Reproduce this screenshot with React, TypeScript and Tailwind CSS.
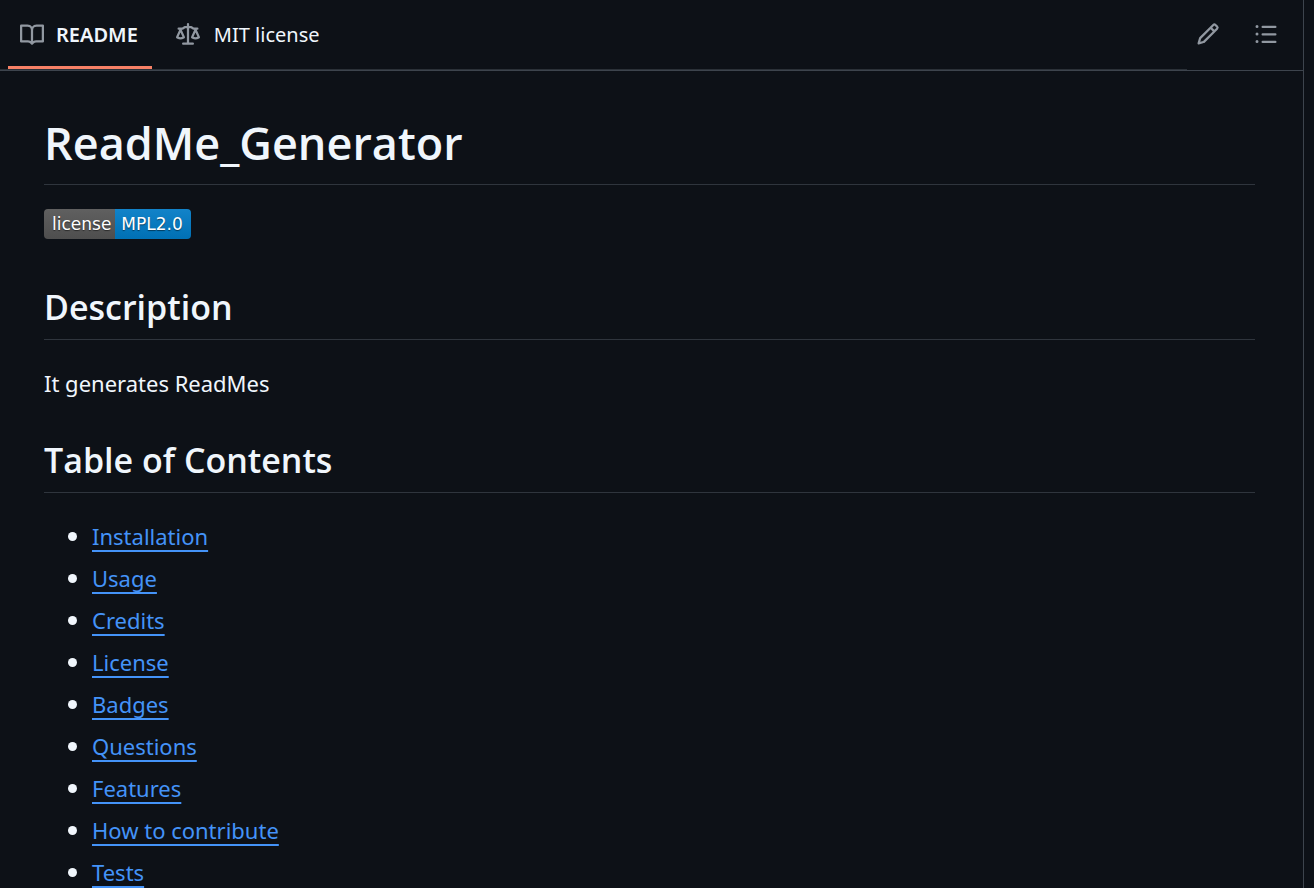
import type { ReactNode } from "react";

const icons = {
  book: "M0 1.75A.75.75 0 0 1 .75 1h4.253c1.227 0 2.317.59 3 1.501A3.743 3.743 0 0 1 11.006 1h4.245a.75.75 0 0 1 .75.75v10.5a.75.75 0 0 1-.75.75h-4.507a2.25 2.25 0 0 0-1.591.659l-.622.621a.75.75 0 0 1-1.06 0l-.622-.621A2.25 2.25 0 0 0 5.258 13H.75a.75.75 0 0 1-.75-.75Zm7.251 10.324.004-5.073-.002-2.253A2.25 2.25 0 0 0 5.003 2.5H1.5v9h3.757a3.75 3.75 0 0 1 1.994.574ZM8.755 4.75l-.004 7.322a3.752 3.752 0 0 1 1.992-.572H14.5v-9h-3.495a2.25 2.25 0 0 0-2.25 2.25Z",
  law: "M8.75.75V2h.985c.304 0 .603.08.867.231l1.29.736c.038.022.08.033.124.033h2.234a.75.75 0 0 1 0 1.5h-.427l2.111 4.692a.75.75 0 0 1-.154.838l-.53-.53.529.531-.001.002-.002.002-.006.006-.006.005-.01.01-.045.04c-.21.176-.441.327-.686.45C14.556 10.78 13.88 11 13 11a4.498 4.498 0 0 1-2.023-.454 3.544 3.544 0 0 1-.686-.45l-.045-.04-.016-.015-.006-.006-.004-.004v-.001a.75.75 0 0 1-.154-.838L12.178 4.5h-.162c-.305 0-.604-.079-.868-.231l-1.29-.736a.245.245 0 0 0-.124-.033H8.75V13h2.5a.75.75 0 0 1 0 1.5h-6.5a.75.75 0 0 1 0-1.5h2.5V3.5h-.984a.245.245 0 0 0-.124.033l-1.289.737c-.265.15-.564.23-.869.23h-.162l2.112 4.692a.75.75 0 0 1-.154.838l-.53-.53.529.531-.001.002-.002.002-.006.006-.016.015-.045.04c-.21.176-.441.327-.686.45C4.556 10.78 3.88 11 3 11a4.498 4.498 0 0 1-2.023-.454 3.544 3.544 0 0 1-.686-.45l-.045-.04-.016-.015-.006-.006-.004-.004v-.001a.75.75 0 0 1-.154-.838L2.178 4.5H1.75a.75.75 0 0 1 0-1.5h2.234a.249.249 0 0 0 .125-.033l1.288-.737c.265-.15.564-.23.869-.23h.984V.75a.75.75 0 0 1 1.5 0Zm2.945 8.477c.285.135.718.273 1.305.273s1.02-.138 1.305-.273L13 6.327Zm-10 0c.285.135.718.273 1.305.273s1.02-.138 1.305-.273L3 6.327Z",
  pencil:
    "M11.013 1.427a1.75 1.75 0 0 1 2.474 0l1.086 1.086a1.75 1.75 0 0 1 0 2.474l-8.61 8.61c-.21.21-.47.364-.756.445l-3.251.93a.75.75 0 0 1-.927-.928l.929-3.25c.081-.286.235-.547.445-.758l8.61-8.61Zm.176 4.823L9.75 4.81l-6.286 6.287a.253.253 0 0 0-.064.108l-.558 1.953 1.953-.558a.253.253 0 0 0 .108-.064Zm1.238-3.763a.25.25 0 0 0-.354 0L10.811 3.75l1.439 1.44 1.263-1.263a.25.25 0 0 0 0-.354Z",
  list: "M5.75 2.5h8.5a.75.75 0 0 1 0 1.5h-8.5a.75.75 0 0 1 0-1.5Zm0 5h8.5a.75.75 0 0 1 0 1.5h-8.5a.75.75 0 0 1 0-1.5Zm0 5h8.5a.75.75 0 0 1 0 1.5h-8.5a.75.75 0 0 1 0-1.5ZM2 14a1 1 0 1 1 0-2 1 1 0 0 1 0 2Zm1-6a1 1 0 1 1-2 0 1 1 0 0 1 2 0ZM2 4a1 1 0 1 1 0-2 1 1 0 0 1 0 2Z",
};

function Icon({ name }: { name: keyof typeof icons }) {
  return (
    <svg viewBox="0 0 16 16" className="size-6 shrink-0 fill-[#9198a1]" aria-hidden="true">
      <path d={icons[name]} />
    </svg>
  );
}

function SectionHeading({ children }: { children: ReactNode }) {
  return (
    <h2 className="mb-[25px] border-b border-[#2f353d] pb-[10px] font-['Open_Sans',sans-serif] text-[34px] leading-[43px] font-semibold">
      {children}
    </h2>
  );
}

const contents = [
  "Installation",
  "Usage",
  "Credits",
  "License",
  "Badges",
  "Questions",
  "Features",
  "How to contribute",
  "Tests",
];

export default function App() {
  return (
    <div className="h-screen overflow-hidden bg-[#0d1117] pr-[10px] font-['Noto_Sans',sans-serif] text-[#f0f6fc]">
      <div className="min-h-full border-r border-[#3d444d]">
        <header className="flex h-[71px] border-b border-[#3d444d]">
          <nav className="flex flex-1 border-b border-[#2b3138] pl-2 text-xl" aria-label="Repository files">
            <a
              href="#readme"
              aria-current="page"
              className="flex items-center gap-3 border-b-3 border-[#f78166] pt-[3px] pr-[14px] pl-3 font-semibold"
            >
              <Icon name="book" />
              README
            </a>
            <a href="#mit-license" className="ml-3 flex items-center gap-[14px] px-3">
              <Icon name="law" />
              MIT license
            </a>
          </nav>
          <div className="flex items-center gap-4 pr-4 pb-[2px]">
            <button type="button" aria-label="Edit file" className="grid size-[42px] place-items-center">
              <Icon name="pencil" />
            </button>
            <button type="button" aria-label="Outline" className="grid size-[42px] place-items-center">
              <Icon name="list" />
            </button>
          </div>
        </header>

        <article className="pt-[42px] pr-12 pl-11 text-[22px] leading-9">
          <h1 className="mb-6 border-b border-[#2f353d] pb-[11px] font-['Open_Sans',sans-serif] text-[45px] leading-[60px] font-semibold">
            ReadMe_Generator
          </h1>
          <div className="mb-[39px] flex h-[38px] items-start">
            <a
              href="#license"
              className="flex overflow-hidden rounded-[4px] font-['DejaVu_Sans',sans-serif] text-[17px] leading-[30px] text-white [text-shadow:0_1px_1px_#01010180]"
            >
              <span className="bg-linear-to-b from-[#606060] to-[#4e4e4e] pr-1 pl-2">license</span>
              <span className="bg-linear-to-b from-[#1283c9] to-[#0070b4] pr-2 pl-[6px]">MPL2.0</span>
            </a>
          </div>

          <SectionHeading>Description</SectionHeading>
          <p className="mb-[38px]">It generates ReadMes</p>

          <SectionHeading>Table of Contents</SectionHeading>
          <ul className="flex flex-col gap-[6px] pl-6">
            {contents.map((item) => (
              <li key={item} className="flex items-center gap-[15px]">
                <span className="size-[9px] rounded-full bg-[#f0f6fc]" />
                <a
                  href={`#${item.toLowerCase().replaceAll(" ", "-")}`}
                  className="text-[#4493f8] underline decoration-2 underline-offset-[5px]"
                >
                  {item}
                </a>
              </li>
            ))}
          </ul>
        </article>
      </div>
    </div>
  );
}
